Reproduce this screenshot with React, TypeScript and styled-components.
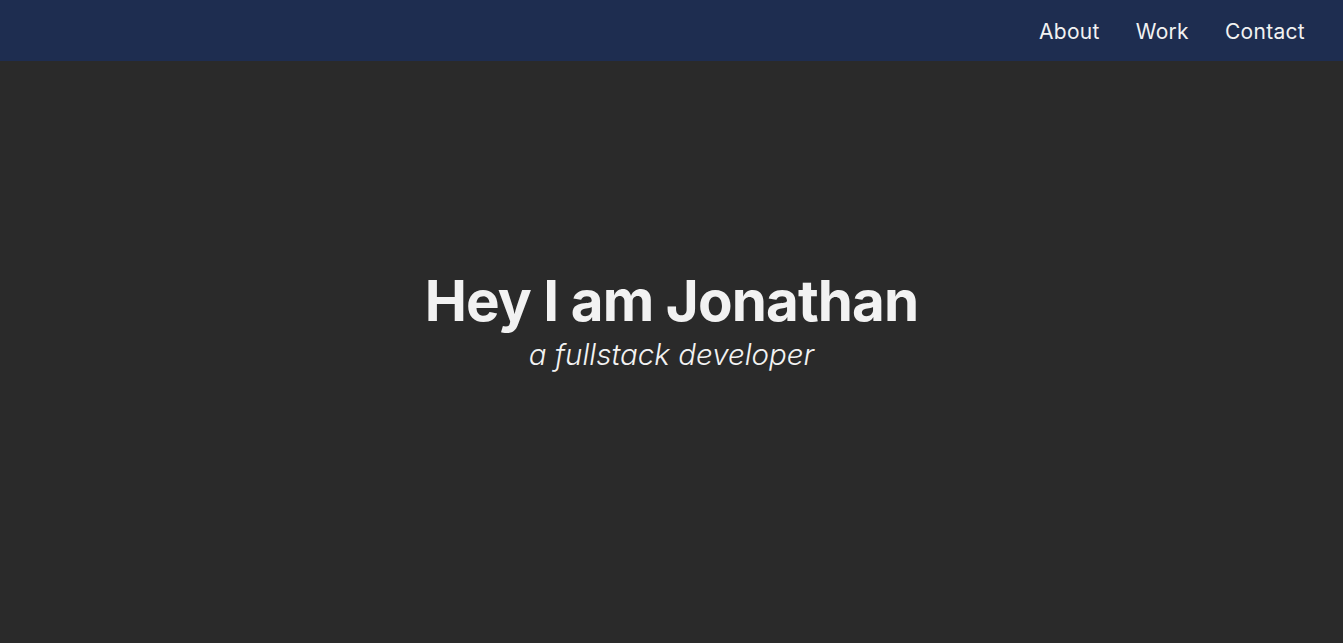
import React from "react";
import styled, { createGlobalStyle } from "styled-components";

const GlobalStyle = createGlobalStyle`
  html, body { margin: 0; padding: 0; background: #2a2a2a; }
  body { font-family: Inter, "Noto Sans", sans-serif; color: #f2f2f2; }
`;

const Page = styled.div`
  position: relative;
  min-height: 100vh;
  background: #2a2a2a;
`;

const NavBar = styled.nav`
  position: fixed;
  top: 0;
  left: 0;
  right: 0;
  height: 61px;
  background: #1e2d50;
  display: flex;
  justify-content: flex-end;
  align-items: center;
  gap: 36px;
  padding: 2px 38px 0 0;
  box-sizing: border-box;
  z-index: 10;
`;

const NavLink = styled.a`
  font-family: Inter, "Noto Sans", sans-serif;
  font-size: 21px;
  font-weight: 400;
  color: #f2f2f2;
  text-decoration: none;
  letter-spacing: 0.3px;
`;

const Hero = styled.main`
  height: 100vh;
  display: flex;
  flex-direction: column;
  align-items: center;
  justify-content: center;
  gap: 2px;
  box-sizing: border-box;
`;

const Title = styled.h1`
  margin: 0;
  font-family: Inter, "Noto Sans", sans-serif;
  font-size: 56.5px;
  font-weight: 700;
  line-height: 62px;
  letter-spacing: -0.9px;
  color: #f2f2f2;
`;

const Subtitle = styled.p`
  margin: 0;
  font-family: Inter, "Noto Sans", sans-serif;
  font-size: 29.5px;
  font-style: italic;
  font-weight: 300;
  line-height: 40px;
  color: #f2f2f2;
`;

export default function App() {
  return (
    <Page>
      <GlobalStyle />
      <NavBar>
        <NavLink href="#about">About</NavLink>
        <NavLink href="#work">Work</NavLink>
        <NavLink href="#contact">Contact</NavLink>
      </NavBar>
      <Hero>
        <Title>Hey I am Jonathan</Title>
        <Subtitle>a fullstack developer</Subtitle>
      </Hero>
    </Page>
  );
}
